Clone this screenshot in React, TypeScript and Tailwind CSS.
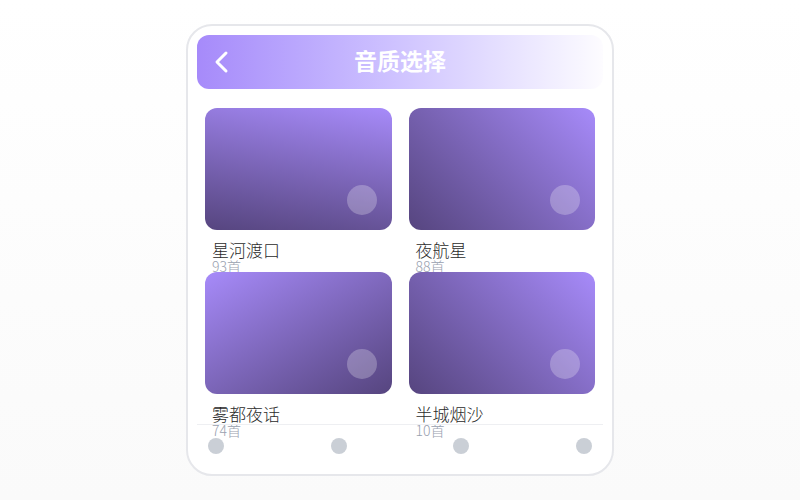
import type { CSSProperties } from 'react'

interface Album {
  title: string
  count: number
  grad: string
}

const albums: Album[] = [
  { title: '星河渡口', count: 93, grad: 'bg-linear-190' },
  { title: '夜航星', count: 88, grad: 'bg-linear-225' },
  { title: '雾都夜话', count: 74, grad: 'bg-linear-150' },
  { title: '半城烟沙', count: 10, grad: 'bg-linear-225' },
]

const font: CSSProperties = {
  fontFamily: '"Noto Sans CJK SC", "Noto Sans", sans-serif',
}

function AlbumCard({ album }: { album: Album }) {
  return (
    <div className="h-[164px]">
      {/* Cover */}
      <div
        className={`relative h-[122px] rounded-xl ${album.grad} from-[#a78bfa] to-[#56457f]`}
      >
        <div className="absolute right-[15px] bottom-[15px] w-[30px] h-[30px] rounded-full bg-white/25" />
      </div>
      <div className="px-[7px] mt-[11px]">
        <div className="text-[17px] leading-[18px] font-light text-[#2b2b2b]">{album.title}</div>
        <div className="text-[14px] leading-[14px] font-light text-gray-400">{album.count}首</div>
      </div>
    </div>
  )
}

export default function App() {
  return (
    <div
      className="h-[500px] w-full flex items-center justify-center bg-linear-to-b from-white to-[#fafafa]"
      style={font}
    >
      <div className="w-[428px] h-[452px] rounded-[26px] border-2 border-[#e6e7eb] bg-white flex flex-col px-[9px] pt-[9px]">
        {/* Header */}
        <div className="relative h-[54px] shrink-0 rounded-xl bg-linear-to-r from-[#a68afa] to-[#fdfcff] flex items-center justify-center">
          <svg
            className="absolute left-[17px] top-1/2 -translate-y-1/2"
            width="16"
            height="24"
            viewBox="0 0 16 24"
            fill="none"
            stroke="white"
            strokeWidth="3"
            strokeLinecap="round"
            strokeLinejoin="round"
          >
            <path d="M12 3 L3 12 L12 21" />
          </svg>
          <span className="text-[23px] leading-none font-bold text-white mb-[4px]">音质选择</span>
        </div>

        {/* Grid */}
        <div className="flex-1 min-h-0 mt-[19px] px-[8px]">
          <div className="grid grid-cols-2 gap-x-[17px]">
            {albums.map((a) => (
              <AlbumCard key={a.title} album={a} />
            ))}
          </div>
        </div>

        {/* Bottom nav */}
        <div className="shrink-0 border-t border-[#eeeff2] pt-[13px] pb-[20px] px-[11px] flex justify-between">
          {[0, 1, 2, 3].map((i) => (
            <div key={i} className="w-4 h-4 rounded-full bg-[#cacfd6]" />
          ))}
        </div>
      </div>
    </div>
  )
}
